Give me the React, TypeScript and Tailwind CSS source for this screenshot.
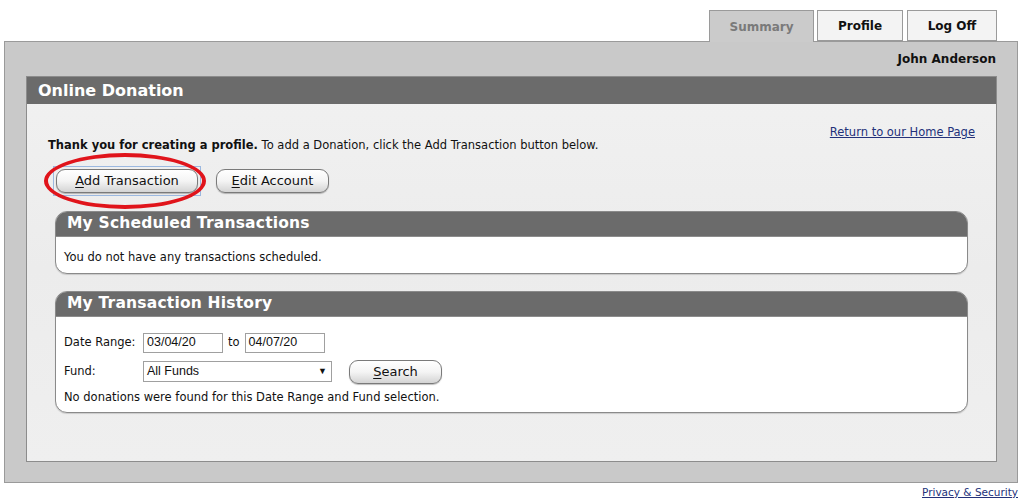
import React from 'react';

const font = "font-['DejaVu_Sans','Verdana',sans-serif]";

function PillButton({ label, access, width, focused }: { label: string; access: string; width: string; focused?: boolean }) {
  const rest = label.slice(1);
  return (
    <div className={focused ? 'p-[2px] border border-[#9bb8e0]' : 'p-[3px]'}>
      <button
        className={`${width} h-[24px] rounded-[9px] border border-[#7a7a7a] bg-gradient-to-b from-white via-[#f4f4f4] to-[#d4d4d4] text-[13px] text-[#111] shadow-[0_1px_1px_rgba(0,0,0,0.25)] leading-none`}
      >
        <span className="underline underline-offset-2">{access}</span>
        {rest}
      </button>
    </div>
  );
}

function Section({ title, children }: { title: string; children: React.ReactNode }) {
  return (
    <div className="mx-[28px] rounded-[12px] border border-[#8a8a8a] bg-white overflow-hidden shadow-[0_1px_1px_rgba(0,0,0,0.15)]">
      <div className="h-[25px] bg-[#6b6b6b] border-b border-[#8c8c8c] pl-[11px] flex items-center text-[15.5px] font-bold text-white tracking-[0.2px]">
        {title}
      </div>
      {children}
    </div>
  );
}

export default function App() {
  return (
    <div className={`w-[1024px] h-[499px] bg-white relative overflow-hidden ${font} text-[11.5px] text-[#111]`}>
      {/* Tabs */}
      <div className="flex justify-end items-end pt-[10px] pr-[27px] relative z-10 -mb-px">
        <div className="w-[105px] h-[32px] bg-[#cbcbcb] border border-b-0 border-[#9a9a9a] flex items-center justify-center pt-px text-[12px] font-bold text-[#7a7a7a]">
          Summary
        </div>
        <div className="ml-[3px] w-[86px] h-[31px] mb-px bg-[#f3f3f3] border border-[#9a9a9a] flex items-center justify-center text-[12px] font-bold text-[#111]">
          Profile
        </div>
        <div className="ml-[4px] w-[90px] h-[31px] mb-px bg-[#f3f3f3] border border-[#9a9a9a] flex items-center justify-center text-[12px] font-bold text-[#111]">
          Log Off
        </div>
      </div>

      {/* Outer panel */}
      <div className="ml-[4px] w-[1014px] h-[442px] bg-[#c9c9c9] border border-[#9a9a9a] flex flex-col">
        <div className="h-[34px] flex items-center justify-end pr-[21px] text-[12px] font-bold text-[#111]">
          John Anderson
        </div>
        <div className="ml-[21px] w-[971px] h-[386px] border border-[#8c8c8c] bg-gradient-to-b from-[#f1f1f1] via-[#ececec] to-[#efefef] flex flex-col">
          <div className="h-[27px] bg-[#6b6b6b] pl-[11px] flex items-center text-[16px] font-bold text-white">
            Online Donation
          </div>
          <div className="flex justify-end pr-[21px] pt-[20px]">
            <a href="#" className="text-[11.5px] text-[#23317a] underline">Return to our Home Page</a>
          </div>
          <div className="pl-[21px] mt-[-4px]">
            <span className="font-bold">Thank you for creating a profile.</span> To add a Donation, click the Add Transaction button below.
          </div>
          <div className="relative flex items-center pl-[26px] mt-[11px] gap-[12px]">
            <PillButton label="Add Transaction" access="A" width="w-[142px]" focused />
            <PillButton label="Edit Account" access="E" width="w-[113px]" />
            <div className="absolute left-[17px] top-[-13px] w-[162px] h-[56px] rounded-[50%] border-[4px] border-[#e0141b]" />
          </div>

          <div className="mt-[15px]">
            <Section title="My Scheduled Transactions">
              <div className="h-[36px] pl-[8px] pt-[7px] flex items-center">You do not have any transactions scheduled.</div>
            </Section>
          </div>

          <div className="mt-[17px]">
            <Section title="My Transaction History">
              <div className="pl-[8px] pt-[15px] pb-[5px] flex flex-col">
                <div className="flex items-center h-[22px]">
                  <span className="w-[79px]">Date Range:</span>
                  <div className="w-[80px] h-[20px] border border-[#a0a0a0] bg-white px-[3px] flex items-center font-['Liberation_Sans',sans-serif] text-[12.5px]">03/04/20</div>
                  <span className="mx-[5px]">to</span>
                  <div className="w-[80px] h-[20px] border border-[#a0a0a0] bg-white px-[3px] flex items-center font-['Liberation_Sans',sans-serif] text-[12.5px]">04/07/20</div>
                </div>
                <div className="flex items-center h-[28px] mt-[4px]">
                  <span className="w-[79px]">Fund:</span>
                  <div className="w-[189px] h-[21px] border border-[#a0a0a0] bg-white pl-[3px] pr-[4px] flex items-center justify-between font-['Liberation_Sans',sans-serif] text-[12.5px]">
                    <span>All Funds</span>
                    <span className="text-[9px]">▼</span>
                  </div>
                  <div className="ml-[14px]">
                    <PillButton label="Search" access="S" width="w-[93px]" />
                  </div>
                </div>
                <div className="h-[18px] mt-[3px] flex items-center">No donations were found for this Date Range and Fund selection.</div>
              </div>
            </Section>
          </div>
        </div>
      </div>

      <div className="flex justify-end pr-[6px] pt-[2px]">
        <a href="#" className="text-[10.5px] text-[#23317a] underline">Privacy &amp; Security</a>
      </div>
    </div>
  );
}
